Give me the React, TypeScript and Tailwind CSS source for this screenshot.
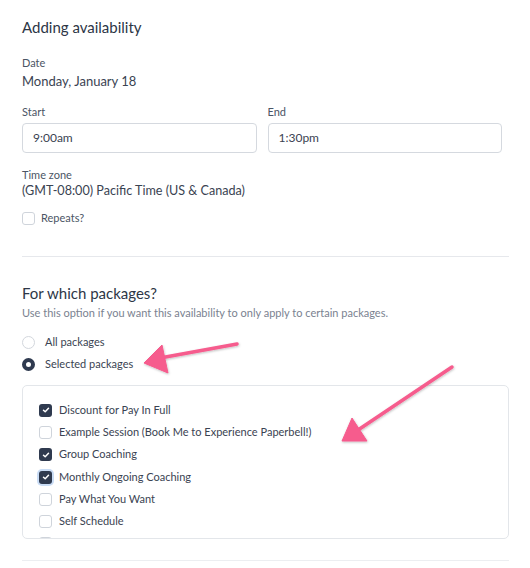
import React from 'react';

const packages = [
    { name: 'Discount for Pay In Full', checked: true },
    { name: 'Example Session (Book Me to Experience Paperbell!)', checked: false },
    { name: 'Group Coaching', checked: true },
    { name: 'Monthly Ongoing Coaching', checked: true, focus: true },
    { name: 'Pay What You Want', checked: false },
    { name: 'Self Schedule', checked: false },
];

function Checkbox({ checked, focus }: { checked?: boolean; focus?: boolean }) {
    if (checked) {
        return (
            <span className={`w-[13px] h-[13px] rounded-[3px] bg-[#2f3a4f] flex items-center justify-center flex-shrink-0 ${focus ? 'ring-2 ring-[#c9dcf5]' : ''}`}>
                <svg width="8" height="8" viewBox="0 0 8 8" fill="none">
                    <path d="M1.5 4.2 L3.2 5.8 L6.5 2.3" stroke="white" strokeWidth="1.5" strokeLinecap="round" strokeLinejoin="round" />
                </svg>
            </span>
        );
    }
    return <span className="w-[13px] h-[13px] rounded-[3px] border border-[#cfd4db] bg-white flex-shrink-0" />;
}

function Radio({ checked }: { checked?: boolean }) {
    return checked ? (
        <span className="w-[13px] h-[13px] rounded-full border-[4px] border-[#2f3a4f] bg-white flex-shrink-0" />
    ) : (
        <span className="w-[13px] h-[13px] rounded-full border border-[#d3d7dd] bg-white flex-shrink-0" />
    );
}

function Arrows() {
    return (
        <svg className="absolute inset-0 pointer-events-none" width="530" height="568" viewBox="0 0 530 568">
            <defs>
                <filter id="sh" x="-20%" y="-20%" width="140%" height="140%">
                    <feDropShadow dx="0.5" dy="1" stdDeviation="1" floodColor="#000" floodOpacity="0.25" />
                </filter>
            </defs>
            <g fill="#f65b8d" stroke="#f65b8d" filter="url(#sh)">
                <line x1="237" y1="344" x2="160" y2="358" strokeWidth="3.5" strokeLinecap="round" />
                <polygon points="144,363 162,345 168,373" strokeWidth="1" strokeLinejoin="round" />
                <line x1="452" y1="367" x2="358" y2="430" strokeWidth="3.5" strokeLinecap="round" />
                <polygon points="342,441 352,418 367,441" strokeWidth="1" strokeLinejoin="round" />
            </g>
        </svg>
    );
}

export default function App() {
    return (
        <div className="relative w-[530px] h-[568px] overflow-hidden bg-white text-[#3a4352]" style={{ fontFamily: 'Lato, "Open Sans", sans-serif' }}>
            <div className="pt-[18px] pl-[22px] pr-[21px]">
                <h2 className="text-[15px] leading-[18px] text-[#2d3646]">Adding availability</h2>

                {/* Date */}
                <div className="mt-[20px]">
                    <p className="text-[11px] leading-[14px] text-[#4b5565]">Date</p>
                    <p className="mt-[2px] text-[13px] leading-[18px]">Monday, January 18</p>
                </div>

                {/* Start / End */}
                <div className="mt-[15px] w-[480px] grid grid-cols-2 gap-[11px]">
                    <div>
                        <p className="text-[11px] leading-[14px] text-[#4b5565]">Start</p>
                        <div className="mt-[4px] h-[30px] rounded-[4px] border border-[#d5d9df] flex items-center px-[10px] text-[12px]">9:00am</div>
                    </div>
                    <div>
                        <p className="text-[11px] leading-[14px] text-[#4b5565]">End</p>
                        <div className="mt-[4px] h-[30px] rounded-[4px] border border-[#d5d9df] flex items-center px-[10px] text-[12px]">1:30pm</div>
                    </div>
                </div>

                {/* Time zone */}
                <div className="mt-[15px]">
                    <p className="text-[11px] leading-[14px] text-[#4b5565]">Time zone</p>
                    <p className="text-[12.6px] leading-[18px]">(GMT-08:00) Pacific Time (US &amp; Canada)</p>
                </div>

                <div className="mt-[11px] h-[14px] flex items-center gap-[6px]">
                    <Checkbox />
                    <span className="text-[11px] text-[#4b5565]">Repeats?</span>
                </div>

                <div className="mt-[31px] h-px bg-[#e6e8ec]" />

                {/* Packages */}
                <h2 className="mt-[27px] text-[15px] leading-[18px] text-[#2d3646]">For which packages?</h2>
                <p className="mt-[4px] text-[11px] leading-[14px] text-[#7a8290]">Use this option if you want this availability to only apply to certain packages.</p>

                <div className="mt-[15px] flex flex-col gap-[8px]">
                    <div className="h-[14px] flex items-center gap-[10px]">
                        <Radio />
                        <span className="text-[11px] text-[#3a4352]">All packages</span>
                    </div>
                    <div className="h-[14px] flex items-center gap-[10px]">
                        <Radio checked />
                        <span className="text-[11px] text-[#3a4352]">Selected packages</span>
                    </div>
                </div>

                <div className="mt-[14px] h-[154px] rounded-[5px] border border-[#e3e6ea] overflow-hidden pl-[16px] pt-[13px]">
                    {packages.map(p => (
                        <div key={p.name} className="h-[22.3px] flex items-center gap-[7px]">
                            <Checkbox checked={p.checked} focus={p.focus} />
                            <span className="text-[11px] text-[#3a4352]">{p.name}</span>
                        </div>
                    ))}
                    {/* next row, scrolled out of view */}
                    <div className="h-[22.3px] flex items-center">
                        <Checkbox />
                    </div>
                </div>

                <div className="mt-[21px] h-px bg-[#eceef1]" />
            </div>
            <Arrows />
        </div>
    );
}
